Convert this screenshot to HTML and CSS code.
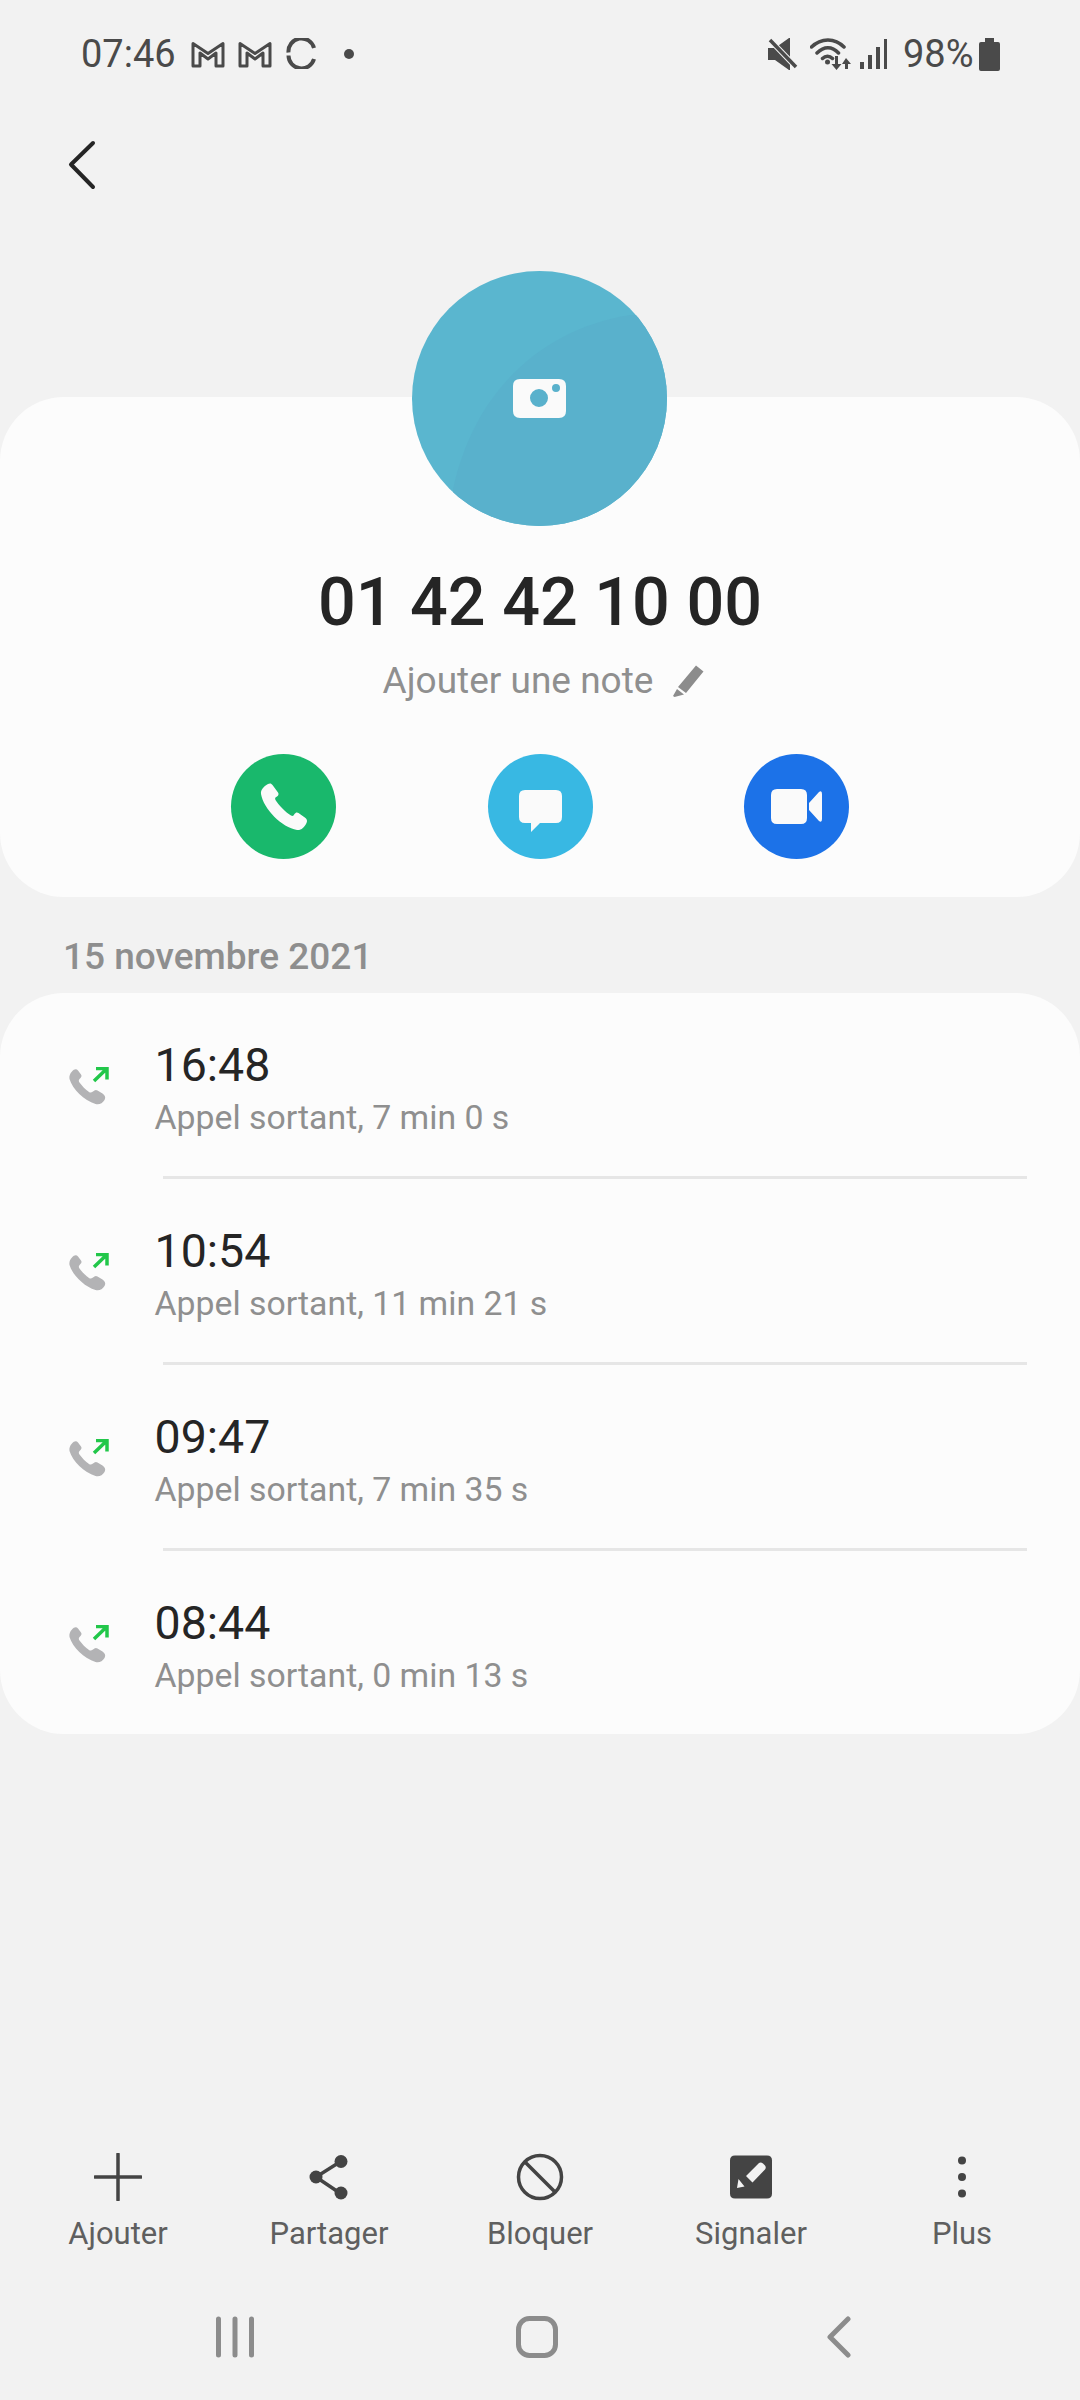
FILE: index.html
```html
<!DOCTYPE html>
<html lang="fr">
<head>
<meta charset="utf-8">
<title>Journal d'appels</title>
<link rel="stylesheet" href="styles.css">
</head>
<body>
<div class="screen">
  <header class="status">
    <div class="status-group">
      <span class="clock">07:46</span>
      <svg class="st-m1" width="34" height="27" viewBox="0 0 34 27"><path class="ln-status" d="M2 2.500 17 12.500 32 2.500V25H25V12L17 18 9 12V25H2Z"/></svg>
      <svg class="st-m2" width="34" height="27" viewBox="0 0 34 27"><path class="ln-status" d="M2 2.500 17 12.500 32 2.500V25H25V12L17 18 9 12V25H2Z"/></svg>
      <svg class="st-sync" width="31" height="31" viewBox="0 0 31 31"><path class="ln-sync" d="M2.500 14.500A13 13 0 0 1 28 10M2.500 17.500A13 13 0 0 0 28 21"/></svg>
      <svg class="st-dot" width="10" height="10" viewBox="0 0 10 10"><circle class="fl-status" cx="5" cy="5" r="5"/></svg>
    </div>
    <div class="status-group">
      <svg class="st-mute" width="30" height="32" viewBox="0 0 30 32"><path class="fl-status" d="M0 10H7L21 0H22V32H21L7 22H0Z"/><path class="ln-gap" d="M2 2 28 29"/><path class="ln-slash" d="M2 2 28 29"/></svg>
      <svg class="st-wifi" width="42" height="32" viewBox="0 0 42 32"><path class="ln-wifi" d="M1.500 9C11 -.5 25 -.5 34 9M7 15C14 8 22 8 28.500 15M12.500 20.500C15.500 17.500 19.500 17.500 22.500 20.500"/><circle class="fl-status" cx="17.500" cy="24" r="2.500"/><path class="fl-status" d="M25 18H28V26H31.500L26.500 32 21.500 26H25ZM36 20 41 26H38V31H35V26H32Z"/></svg>
      <svg class="st-signal" width="27" height="30" viewBox="0 0 27 30"><path class="fl-status" d="M0 23H4V30H0ZM8 16H12V30H8ZM16 8H20V30H16ZM24 0H27V30H24Z"/></svg>
      <span class="battery-text">98%</span>
      <svg class="st-batt" width="21" height="33" viewBox="0 0 21 33"><path class="fl-status" d="M6 0H15V4H19Q21 4 21 6V31Q21 33 19 33H2Q0 33 0 31V6Q0 4 2 4H6Z"/></svg>
    </div>
  </header>

  <nav class="toolbar">
    <svg width="28" height="50" viewBox="0 0 28 50"><path class="ln-back" d="M25 3 3 24.500 25 47"/></svg>
  </nav>

  <section class="card hero">
    <svg class="avatar" width="255" height="255" viewBox="0 0 255 255">
      <defs><clipPath id="disc"><circle cx="127.500" cy="127.500" r="127.500"/></clipPath></defs>
      <circle class="av-base" cx="127.500" cy="127.500" r="127.500"/>
      <path class="av-shade" clip-path="url(#disc)" d="M41 218C62 120 130 58 218 44H255V255H41Z"/>
      <path class="av-cam" fill-rule="evenodd" d="M108 108H147Q154 108 154 115V140Q154 147 147 147H108Q101 147 101 140V115Q101 108 108 108ZM127 118A9 9 0 1 0 127 136 9 9 0 0 0 127 118ZM144 113A4 4 0 1 0 144 121 4 4 0 0 0 144 113Z"/>
    </svg>
    <h1 class="number">01 42 42 10 00</h1>
    <div class="note">
      <span>Ajouter une note</span>
      <svg width="32" height="32" viewBox="0 0 32 32"><path class="fl-note" d="M24 0.500 31.500 6.500 14 28 6 22ZM5 24 12 29.500 2.500 32 1 31Z"/></svg>
    </div>
    <div class="actions">
      <div class="round green">
        <svg width="48" height="48" viewBox="0 0 48 48"><path class="fl-white" d="M8 1C10 0 11.500 .5 12.500 2L18 9.500C19 11 18.500 12.500 17 13.500L15.500 14.500C15 15 15 16 15.500 17 18 21.500 26.500 30 31 32.500 32 33 33 33 33.500 32.500L34.500 31C35.500 29.500 37 29 38.500 30L45.500 35C47 36 47.500 38 46.500 40 44.500 44.500 41 47.500 37 47 22 44.500 3.500 26 1 11 .5 7 3.500 3.500 8 1Z"/></svg>
      </div>
      <div class="round cyan">
        <svg class="msg" width="43" height="42" viewBox="0 0 43 42"><path class="fl-white" d="M6 0H37Q43 0 43 6V27Q43 33 37 33H21L12 42V33H6Q0 33 0 27V6Q0 0 6 0Z"/></svg>
      </div>
      <div class="round blue">
        <svg width="51" height="35" viewBox="0 0 51 35"><path class="fl-white" d="M6 0H30Q36 0 36 6V29Q36 35 30 35H6Q0 35 0 29V6Q0 0 6 0ZM38 14 48 3Q51 1 51 5V30Q51 34 48 32L38 21Z"/></svg>
      </div>
    </div>
  </section>

  <h2 class="date">15 novembre 2021</h2>

  <section class="card log">
    <div class="row">
      <svg class="call" width="40" height="38" viewBox="0 0 40 38"><use href="#call-out"/></svg>
      <div><div class="time">16:48</div><div class="sub">Appel sortant, 7 min 0 s</div></div>
    </div>
    <div class="rule"></div>
    <div class="row">
      <svg class="call" width="40" height="38" viewBox="0 0 40 38"><use href="#call-out"/></svg>
      <div><div class="time">10:54</div><div class="sub">Appel sortant, 11 min 21 s</div></div>
    </div>
    <div class="rule"></div>
    <div class="row">
      <svg class="call" width="40" height="38" viewBox="0 0 40 38"><use href="#call-out"/></svg>
      <div><div class="time">09:47</div><div class="sub">Appel sortant, 7 min 35 s</div></div>
    </div>
    <div class="rule"></div>
    <div class="row">
      <svg class="call" width="40" height="38" viewBox="0 0 40 38"><use href="#call-out"/></svg>
      <div><div class="time">08:44</div><div class="sub">Appel sortant, 0 min 13 s</div></div>
    </div>
  </section>

  <div class="spacer"></div>

  <footer class="bar">
    <div class="tool">
      <svg width="48" height="48" viewBox="0 0 48 48"><path class="ln-tool" d="M24 1V47M1 24H47"/></svg>
      <span>Ajouter</span>
    </div>
    <div class="tool">
      <svg width="48" height="48" viewBox="0 0 48 48"><path class="ln-share" d="M34 9.500 11 24 34 39.500"/><circle class="fl-tool" cx="36" cy="8.500" r="6.500"/><circle class="fl-tool" cx="11" cy="24" r="6.500"/><circle class="fl-tool" cx="36" cy="40" r="6.500"/></svg>
      <span>Partager</span>
    </div>
    <div class="tool">
      <svg width="48" height="48" viewBox="0 0 48 48"><circle class="ln-block" cx="24" cy="24" r="21.500"/><path class="ln-block" d="M9 9 39 39"/></svg>
      <span>Bloquer</span>
    </div>
    <div class="tool">
      <svg width="48" height="48" viewBox="0 0 48 48"><path class="fl-tool" d="M8 2.500H40Q45 2.500 45 7.500V40.500Q45 45.500 40 45.500H8Q3 45.500 3 40.500V7.500Q3 2.500 8 2.500Z"/><path class="fl-cut" d="M32 10Q34 9 36 10.500L38 12.500Q39.500 14.500 38 16.500L25.500 29.500 19 23ZM11.500 26 17.500 33.500 10 35Z"/></svg>
      <span>Signaler</span>
    </div>
    <div class="tool">
      <svg width="48" height="48" viewBox="0 0 48 48"><circle class="fl-tool" cx="24" cy="7.500" r="4"/><circle class="fl-tool" cx="24" cy="24" r="4"/><circle class="fl-tool" cx="24" cy="40.500" r="4"/></svg>
      <span>Plus</span>
    </div>
  </footer>

  <div class="nav">
    <svg width="40" height="42" viewBox="0 0 40 42"><path class="ln-nav" d="M3.500 3V39M20 3V39M36.500 3V39"/></svg>
    <svg width="42" height="42" viewBox="0 0 42 42"><rect class="ln-nav" x="2.500" y="2.500" width="37" height="37" rx="11"/></svg>
    <svg width="24" height="42" viewBox="0 0 24 42"><path class="ln-nav" d="M21 3 3 21 21 39"/></svg>
  </div>

  <svg class="defs" width="0" height="0" aria-hidden="true">
    <symbol id="call-out" viewBox="0 0 40 38">
      <path class="fl-call" d="M3 4.500C5 2 7.500 1.500 9 3.500L12 7.500C13 9 12.500 10 11 11.500 9.500 13 9.500 14 10.500 15.500 13 19 16.500 22.500 20 25 21.500 26 22.500 25.500 24 24.500 25.500 23 27 22.500 28.500 23.500L33.500 26.500C36 28.500 37 30 35.500 33 33.500 36.500 30 38 26.500 37 15 33.500 3.500 22 .5 12 0 9 1 6.500 3 4.500Z"/>
      <path class="ln-arrow" d="M25 14 37.500 2M27 1.500H38V12.500"/>
    </symbol>
  </svg>
</div>
</body>
</html>
```
FILE: styles.css
```css
* { box-sizing: border-box; }
html, body { margin: 0; padding: 0; }
body { background: #f2f2f2; font-family: Roboto, "Noto Sans", sans-serif; }

.screen { width: 1080px; height: 2400px; display: flex; flex-direction: column; background: #f2f2f2; }

/* status bar */
.status { height: 108px; flex: none; padding: 0 80px 0 81px; display: flex; justify-content: space-between; align-items: center; color: #4a4a4a; }
.status-group { display: flex; align-items: center; }
.clock { width: 94px; font-size: 38px; line-height: 44px; font-weight: 400; white-space: nowrap; }
.battery-text { width: 69px; margin-left: 16px; font-size: 38px; line-height: 44px; font-weight: 400; white-space: nowrap; }
.st-m1 { margin-left: 16px; }
.st-m2 { margin-left: 13px; }
.st-sync { margin-left: 14px; margin-top: -2px; }
.st-dot { margin-left: 27px; }
.st-wifi { margin-left: 12px; }
.st-signal { margin-left: 8px; }
.st-batt { margin-left: 7px; }

.fl-status { fill: #4a4a4a; }
.ln-status { fill: none; stroke: #4a4a4a; stroke-width: 3; stroke-linejoin: round; }
.ln-sync { fill: none; stroke: #4a4a4a; stroke-width: 4; }
.ln-gap { fill: none; stroke: #f2f2f2; stroke-width: 5.500; }
.ln-slash { fill: none; stroke: #4a4a4a; stroke-width: 3.500; }
.ln-wifi { fill: none; stroke: #4a4a4a; stroke-width: 3.500; stroke-linecap: round; }

/* toolbar */
.toolbar { height: 114px; flex: none; padding-left: 68px; display: flex; align-items: center; }
.ln-back { fill: none; stroke: #252525; stroke-width: 4; stroke-linecap: round; stroke-linejoin: round; }

/* cards */
.card { background: #fcfcfc; border-radius: 64px; }
.hero { margin-top: 175px; height: 500px; flex: none; display: flex; flex-direction: column; align-items: center; }
.avatar { margin-top: -126px; flex: none; margin-left: -1px; }
.av-base { fill: #5ab6cf; }
.av-shade { fill: #59b1cc; }
.av-cam { fill: #fafafa; }

.number { margin: 36px 0 0; font-size: 66.500px; line-height: 80px; font-weight: 500; color: #252525; }
.note { margin: 17px 0 0 7px; display: flex; align-items: center; gap: 19px; font-size: 37px; line-height: 44px; color: #8f8f8f; }
.fl-note { fill: #8c8c8c; }

.actions { margin-top: 51px; width: 618px; display: flex; justify-content: space-between; }
.round { width: 105px; height: 105px; border-radius: 50%; display: flex; align-items: center; justify-content: center; }
.green { background: #19b86c; }
.cyan { background: #38b8e3; }
.blue { background: #1c72e8; }
.fl-white { fill: #fafafa; }
.msg { margin-top: 8px; }

.date { height: 96px; flex: none; margin: 0; padding: 39px 0 0 63px; font-size: 37px; line-height: 42px; font-weight: 500; color: #8e8e8e; }

/* log */
.log { height: 741px; flex: none; }
.row { height: 183px; padding: 45px 0 0 69px; display: flex; align-items: flex-start; }
.call { flex: none; margin-top: 29px; margin-right: 45.500px; overflow: visible; }
.time { font-size: 46.500px; line-height: 54px; color: #252525; }
.sub { margin-top: 6px; font-size: 33.800px; line-height: 40px; color: #8f8f8f; white-space: nowrap; }
.rule { height: 3px; margin: 0 53px 0 163px; background: #e6e6e6; }
.fl-call { fill: #b3b3b5; }
.ln-arrow { fill: none; stroke: #22c74a; stroke-width: 3.500; }
.defs { position: absolute; }

.spacer { flex: 1; }

/* bottom bar */
.bar { flex: none; display: grid; grid-template-columns: repeat(5, 211px); padding: 0 12.500px; margin-bottom: 26px; }
.tool { display: flex; flex-direction: column; align-items: center; gap: 13px; font-size: 31px; line-height: 40px; color: #5f5f5f; }
.ln-tool { fill: none; stroke: #444; stroke-width: 3.500; stroke-linecap: round; }
.ln-share { fill: none; stroke: #444; stroke-width: 3.500; }
.ln-block { fill: none; stroke: #444; stroke-width: 3.500; }
.fl-tool { fill: #444; }
.fl-cut { fill: #f2f2f2; }

/* nav */
.nav { height: 120px; flex: none; padding: 0 90px 6px 84px; display: grid; grid-template-columns: repeat(3, 1fr); justify-items: center; align-items: center; }
.ln-nav { fill: none; stroke: #8c8c8c; stroke-width: 5; stroke-linecap: round; stroke-linejoin: round; }
```
